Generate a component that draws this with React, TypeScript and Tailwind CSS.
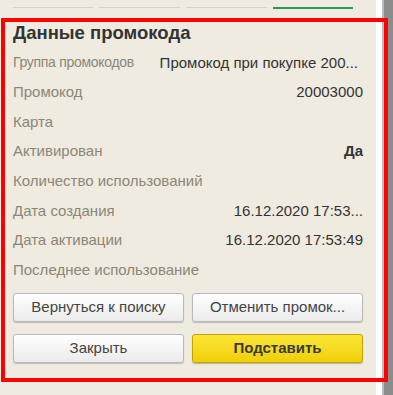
import React from 'react';

const rows: { label: string; value?: string; bold?: boolean; wide?: boolean }[] = [
    { label: 'Группа промокодов', value: 'Промокод при покупке 200...', wide: true },
    { label: 'Промокод', value: '20003000' },
    { label: 'Карта' },
    { label: 'Активирован', value: 'Да', bold: true },
    { label: 'Количество использований' },
    { label: 'Дата создания', value: '16.12.2020 17:53...' },
    { label: 'Дата активации', value: '16.12.2020 17:53:49' },
    { label: 'Последнее использование' },
];

function Btn({ children, primary }: { children: React.ReactNode; primary?: boolean }) {
    return (
        <button
            className={
                primary
                    ? 'flex h-[29px] flex-1 items-center justify-center rounded-[3px] border border-[#c2a400] bg-gradient-to-b from-[#fbe633] to-[#efcf00] text-[15px] font-bold text-[#3a3a3a] shadow-[0_1px_1px_rgba(0,0,0,0.25)]'
                    : 'flex h-[29px] flex-1 items-center justify-center rounded-[3px] border border-[#b9b9b9] bg-gradient-to-b from-white to-[#ebebeb] text-[15px] text-[#444] shadow-[0_1px_1px_rgba(0,0,0,0.2)]'
            }
        >
            {children}
        </button>
    );
}

export default function App() {
    return (
        <div className="relative flex h-[395px] w-[393px] overflow-hidden bg-white font-['Liberation_Sans',Arial,sans-serif]">
            <div className="flex h-full w-[376px] flex-col bg-[#efebe1] px-[13px]">
                {/* tab strip */}
                <div className="flex h-[18px] gap-[6px] pt-[7px]">
                    <div className="h-px w-[80px] bg-[#d6d2c6]" />
                    <div className="h-px w-[81px] bg-[#d6d2c6]" />
                    <div className="h-px w-[81px] bg-[#d6d2c6]" />
                    <div className="h-[2px] w-[80px] bg-[#1f9e5c]" />
                </div>
                <div className="flex h-[29px] items-center text-[18.5px] font-bold text-[#333]">Данные промокода</div>
                <div className="mt-[1px] flex flex-col">
                    {rows.map((r) => (
                        <div key={r.label} className="flex h-[29.6px] items-center justify-between text-[15px]">
                            <span
                                className={
                                    (r.wide ? 'text-[14px] tracking-[-0.3px] ' : '') + 'whitespace-nowrap text-[#8c8677]'
                                }
                            >
                                {r.label}
                            </span>
                            {r.value && (
                                <span
                                    className={
                                        (r.bold ? 'font-bold ' : '') +
                                        (r.wide ? 'mr-[5px] ' : '') +
                                        'whitespace-nowrap text-[#333]'
                                    }
                                >
                                    {r.value}
                                </span>
                            )}
                        </div>
                    ))}
                </div>
                <div className="mt-[8px] flex flex-col gap-[12px]">
                    <div className="flex gap-[8px]">
                        <Btn>Вернуться к поиску</Btn>
                        <Btn>Отменить промок...</Btn>
                    </div>
                    <div className="flex gap-[8px]">
                        <Btn>Закрыть</Btn>
                        <Btn primary>Подставить</Btn>
                    </div>
                </div>
            </div>
            <div className="h-full w-[6px] bg-white" />
            <div className="flex h-full w-[11px]">
                <div className="h-full w-[2px] bg-[#b4bcc0]" />
                <div className="h-full flex-1 bg-[#8c8c8c]" />
            </div>
            {/* annotation frame */}
            <div className="pointer-events-none absolute left-[1px] top-[18px] h-[364px] w-[387px] border-4 border-[#ff0000]" />
        </div>
    );
}
